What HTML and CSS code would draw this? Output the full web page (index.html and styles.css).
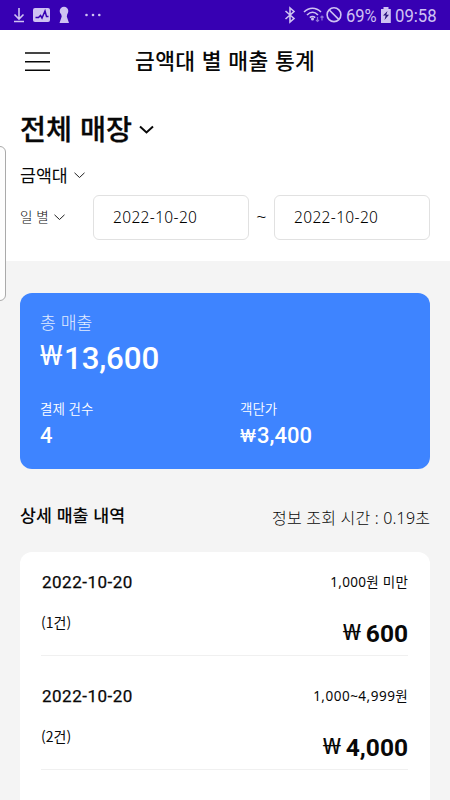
FILE: index.html
```html
<!DOCTYPE html>
<html lang="ko">
<head>
<meta charset="utf-8">
<meta name="viewport" content="width=device-width, initial-scale=1">
<title>금액대 별 매출 통계</title>
<link rel="stylesheet" href="styles.css">
</head>
<body>
<div class="screen">
  <div class="status">
    <svg class="status-left" width="110" height="30" viewBox="0 0 110 30">
      <path class="line" d="M19 8v11M14.500 14.500l4.500 4.500 4.500-4.500M14 21.500h10"/>
      <rect class="fill" x="33" y="8" width="17" height="14" rx="2"/>
      <path class="wave" d="M35.500 17.500h3l2-2 1.500 2.500 3-7 1.500 5.500h2"/>
      <circle class="fill" cx="64" cy="11" r="4.300"/>
      <path class="fill" d="M61 13h6.500l-.7 3.500 2.200 6.500h-9.500l2.200-6.500z"/>
      <circle class="fill" cx="86.500" cy="15" r="1.300"/><circle class="fill" cx="93" cy="15" r="1.300"/><circle class="fill" cx="99.300" cy="15" r="1.300"/>
    </svg>
    <div class="status-right">
      <svg width="60" height="30" viewBox="0 0 60 30">
        <path class="line" d="M-1 11l8.500 7.500-4 3.500V8l4 3.500L-1 19" transform="translate(-.5 0)"/>
        <path class="line" d="M17 12c5-5 12-5 17 0M20 15c3.500-3.500 7.500-3.500 11 0M22.800 17.600c1.800-1.500 3.600-1.500 5.400 0"/>
        <circle class="fill" cx="25.500" cy="19" r="1.500"/>
        <path class="traffic" d="M30.500 17v4.500M29 20l1.500 1.500 1.500-1.500M35 20.500V16M33.500 17.500l1.500-1.500 1.500 1.500"/>
        <circle class="line" cx="47" cy="14.700" r="6.900"/><path class="line" d="M42.300 10l9.400 9.400"/>
      </svg>
      <span class="percent">69%</span>
      <svg class="battery" width="12" height="30" viewBox="0 0 12 30">
        <path class="fill" d="M3.500 7h5v2h2.300v14H1V9h2.500z"/><path class="bolt" d="M7.500 11L3 15.500h2.700L4.500 20 9 14.800H6.300z"/>
      </svg>
      <span class="clock">09:58</span>
    </div>
  </div>

  <header class="header">
    <svg class="menu" width="25" height="20" viewBox="0 0 25 20"><path d="M0 1h25M0 9.700h25M0 18.200h25"/></svg>
    <h1>금액대 별 매출 통계</h1>
  </header>

  <section class="filters">
    <div class="store"><span>전체 매장</span><svg width="15" height="10" viewBox="0 0 15 10"><path d="M1 1.500l6.500 6 6.500-6"/></svg></div>
    <div class="category"><span>금액대</span><svg width="11" height="7" viewBox="0 0 11 7"><path d="M.5.800l5 4.700 5-4.700"/></svg></div>
    <div class="range">
      <div class="period"><span>일 별</span><svg width="11" height="7" viewBox="0 0 11 7"><path d="M.5.800l5 4.700 5-4.700"/></svg></div>
      <div class="date">2022-10-20</div>
      <span class="tilde">~</span>
      <div class="date">2022-10-20</div>
    </div>
  </section>

  <main>
    <section class="summary">
      <div class="total-label">총 매출</div>
      <div class="total"><span class="won">₩</span><span>13,600</span></div>
      <div class="metrics">
        <div><div class="metric-label">결제 건수</div><div class="metric">4</div></div>
        <div><div class="metric-label">객단가</div><div class="metric"><span class="won">₩</span><span class="unit-price">3,400</span></div></div>
      </div>
    </section>
    <div class="section-head"><h2>상세 매출 내역</h2><span class="elapsed">정보 조회 시간 : 0.19초</span></div>
    <section class="details">
      <article>
        <div class="row"><span class="day">2022-10-20</span><span class="band">1,000원 미만</span></div>
        <div class="row amounts"><span class="count">(1건)</span><span class="amount"><span class="won">₩</span><b>600</b></span></div>
      </article>
      <article>
        <div class="row"><span class="day">2022-10-20</span><span class="band">1,000~4,999원</span></div>
        <div class="row amounts"><span class="count">(2건)</span><span class="amount"><span class="won">₩</span><b>4,000</b></span></div>
      </article>
    </section>
  </main>
  <div class="edge-handle"></div>
</div>
</body>
</html>
```
FILE: styles.css
```css
* { box-sizing: border-box; }
body { margin: 0; font-family: "Noto Sans CJK KR", sans-serif; color: #080808; }
.screen { position: relative; width: 450px; height: 800px; overflow: hidden; background: #f4f4f4; }
svg { display: block; flex: none; fill: none; stroke: #080808; overflow: visible; }
h1, h2 { margin: 0; }

.status { height: 30px; background: #3700b3; display: flex; justify-content: space-between; color: #cfc2f2; }
.status svg { stroke: none; }
.status .line { stroke: #cfc2f2; stroke-width: 1.6; }
.status .fill { fill: #cfc2f2; }
.status .wave { stroke: #3700b3; stroke-width: 1.5; }
.status .traffic { stroke: #8e70da; stroke-width: 1.2; }
.status .bolt { fill: #27107a; }
.status-right { display: flex; padding-right: 13px; font: 19px/32px Roboto, sans-serif; }
.percent { width: 32px; margin-left: -1px; transform: scaleX(.87); transform-origin: left; }
.battery { margin-left: 2px; }
.clock { width: 42px; margin-left: 3px; transform: scaleX(.88); transform-origin: left; }

.header { height: 70px; padding: 0 25px; display: flex; background: #fff; }
.menu { margin-top: 22px; stroke-width: 1.6; }
h1 { margin: 12px 0 0 85px; font-size: 21.5px; line-height: 36px; font-weight: 500; letter-spacing: .35px; white-space: nowrap; }

.filters { height: 161px; padding: 7px 20px 0; background: #fff; }
.store { display: flex; align-items: center; height: 40px; font-size: 28.3px; font-weight: 500; -webkit-text-stroke: .3px; }
.store svg { margin: 6px 0 0 7px; stroke-width: 2; }
.category { display: flex; align-items: center; height: 28px; margin-top: 13px; font-size: 17.3px; font-weight: 400; }
.category svg { margin: 2px 0 0 6px; stroke-width: .9; }
.range { display: flex; margin-top: 7px; }
.period { width: 73px; height: 44px; display: flex; align-items: center; font-size: 13.5px; font-weight: 300; padding-bottom: 2px; }
.period svg { margin: 2px 0 0 5px; stroke-width: .9; }
.date { width: 156px; height: 45px; padding-left: 19px; border: 1px solid #e1e1e1; border-radius: 6px; font: 300 15.5px/42px "Noto Sans", sans-serif; letter-spacing: .35px; color: #000; }
.tilde { width: 25px; text-align: center; font: 300 18px/43px "Noto Sans", sans-serif; }

main { padding: 32px 20px 0; }
.summary { height: 176px; padding: 13px 20px 0; border-radius: 12px; background: #3e84ff; color: #fff; }
.total-label { height: 31px; font-size: 17.2px; line-height: 31px; font-weight: 300; opacity: .85; }
.total { display: flex; height: 42px; font: 500 31.3px/43px Roboto, sans-serif; letter-spacing: -.15px; }
.total .won { width: 24px; font: 400 26.5px/37px "Noto Sans", sans-serif; transform: scaleX(1.26); transform-origin: left; }
.metrics { display: grid; grid-template-columns: 200px 1fr; padding-top: 19px; }
.metric-label { font-size: 13.500px; line-height: 20px; font-weight: 350; }
.metric { display: flex; font: 500 22px/35px Roboto, sans-serif; }
.metric .won { width: 17px; font-size: 19px; font-weight: 400; transform: scaleX(1.13); transform-origin: left; }

.section-head { height: 83px; display: flex; justify-content: space-between; padding-top: 31px; }
h2 { font-size: 17.300px; line-height: 30px; font-weight: 500; }
.elapsed { padding-top: 3px; font: 300 16px/30px "Noto Sans", "Noto Sans CJK KR", sans-serif; letter-spacing: .2px; margin-right: -.2px; }
.details { height: 300px; padding: 0 22px 0 21px; border-radius: 12px; background: #fff; }
article { height: 114px; padding-top: 15px; border-bottom: 1px solid #f0f0f0; }
article:first-child { height: 104px; }
article + article { padding-top: 25px; }
.row { display: flex; justify-content: space-between; height: 30px; line-height: 30px; }
.day { padding-left: 1px; font: 400 17px/30px Roboto, sans-serif; letter-spacing: .5px; -webkit-text-stroke: .25px; }
.band { font: 400 13.5px/30px "Noto Sans", "Noto Sans CJK KR", sans-serif; letter-spacing: .3px; margin-right: -.3px; }
article + article .band { letter-spacing: .5px; }
.amounts { height: 42px; margin-top: 7px; }
.count { padding-top: 3px; font-size: 14px; }
.amount { display: flex; gap: 5px; padding-top: 15px; font: 24.5px/30px Roboto, sans-serif; }
.amount .won { font: 21px/27px "Noto Sans", sans-serif; transform: scaleX(1.3); transform-origin: right; }
.amount b { font-weight: 700; }
.edge-handle { position: absolute; left: -10px; top: 146px; width: 16px; height: 155px; border: 1px solid #aaa; border-radius: 6px; background: #fdfdfd; }
```
